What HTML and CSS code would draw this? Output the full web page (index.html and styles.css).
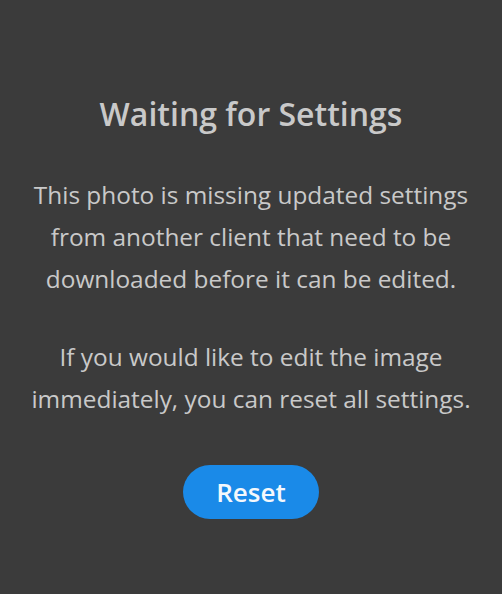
FILE: index.html
```html
<!DOCTYPE html>
<html>
<head>
<meta charset="utf-8">
<link rel="stylesheet" href="styles.css">
</head>
<body>
<main class="panel">
  <h1 class="title">Waiting for Settings</h1>
  <p class="msg">This photo is missing updated settings<br>from another client that need to be<br>downloaded before it can be edited.</p>
  <p class="msg">If you would like to edit the image<br>immediately, you can reset all settings.</p>
  <button class="reset">Reset</button>
</main>
</body>
</html>
```
FILE: styles.css
```css
html, body {
  margin: 0;
  padding: 0;
  background: #3b3b3b;
  height: 100%;
}
.panel {
  display: flex;
  flex-direction: column;
  align-items: center;
  padding-top: 92px;
  font-family: "Open Sans", Lato, sans-serif;
  color: #c9c9c9;
  text-align: center;
}
.title {
  margin: 0;
  font-size: 32px;
  font-weight: 600;
  line-height: 44px;
}
.msg {
  margin: 0;
  font-size: 24.4px;
  line-height: 42px;
}
.title + .msg { margin-top: 38px; }
.msg + .msg { margin-top: 36px; }
.reset {
  margin-top: 45px;
  width: 136px;
  height: 54px;
  border: none;
  border-radius: 27px;
  background: #1a8ae8;
  color: #f4f8fc;
  font-family: "Open Sans", sans-serif;
  font-size: 26px;
  font-weight: 600;
  padding: 0;
}
```
